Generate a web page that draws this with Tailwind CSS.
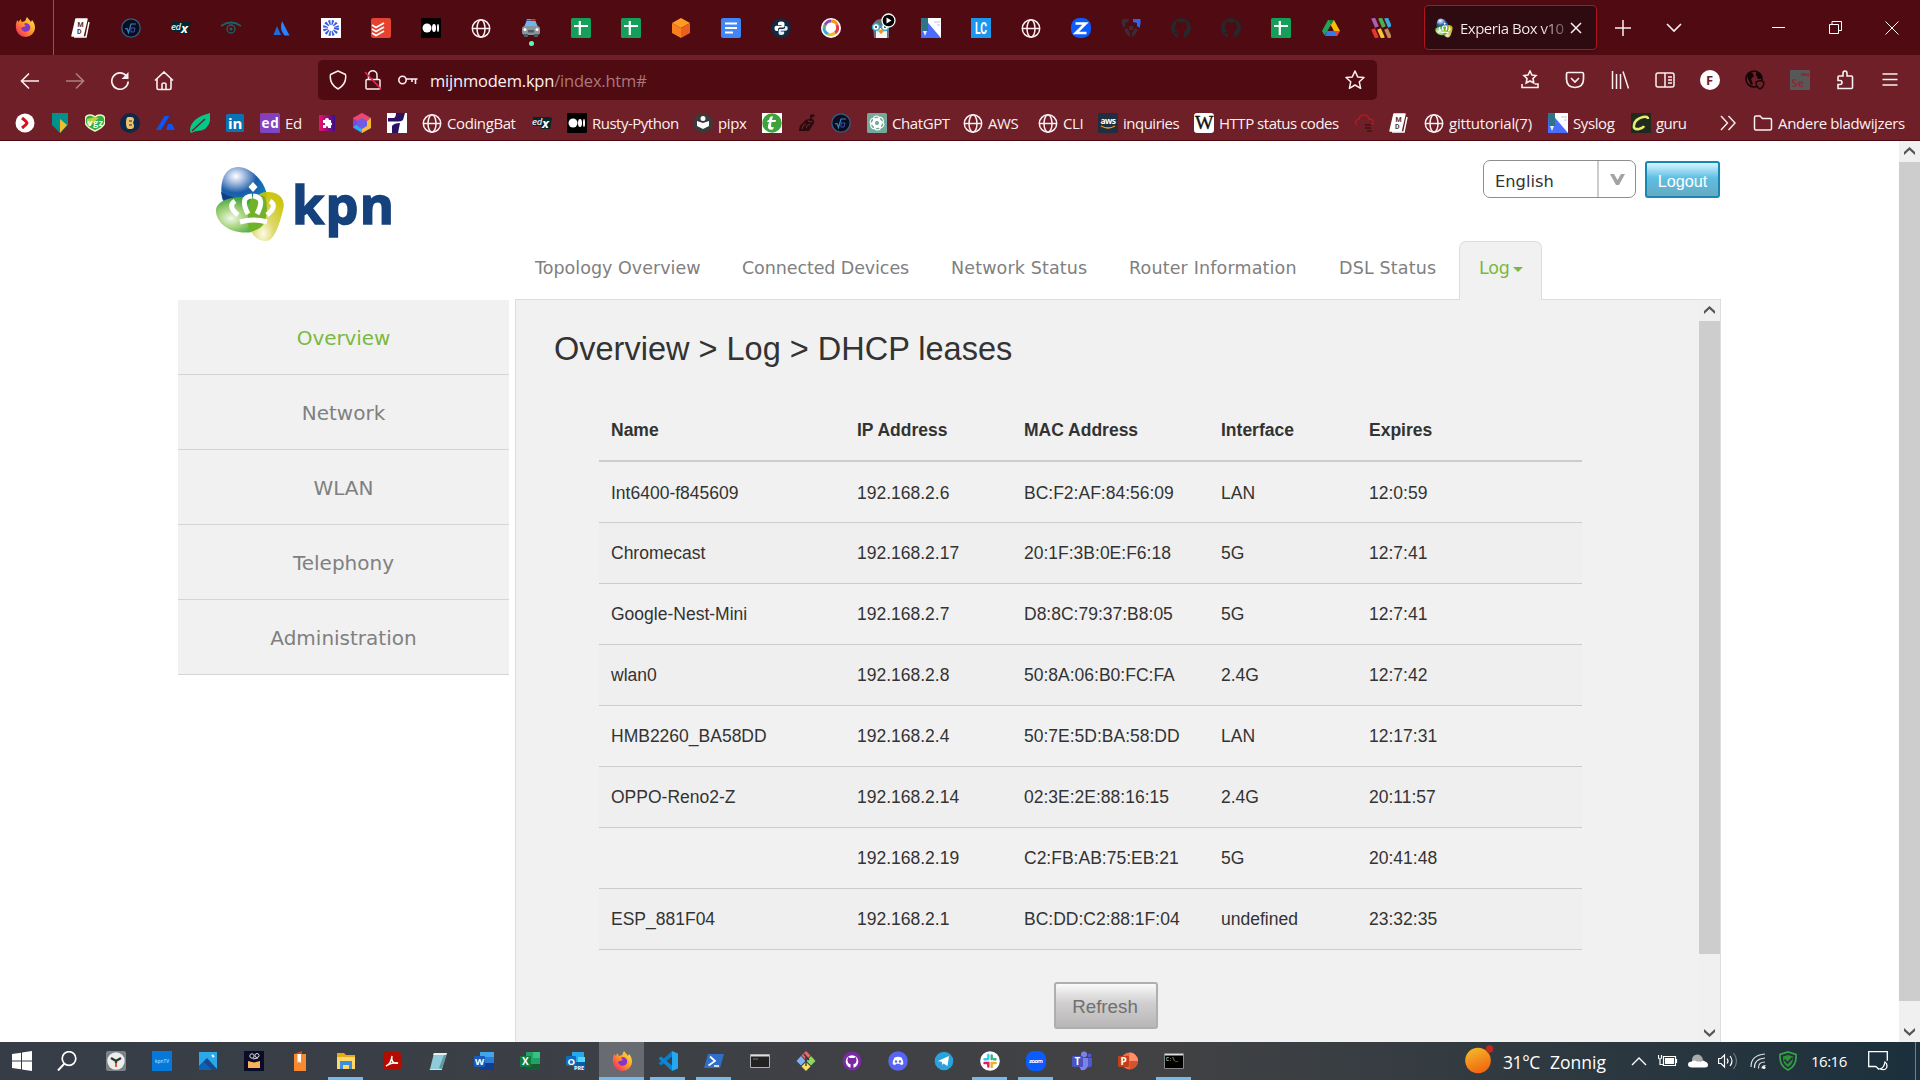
<!DOCTYPE html>
<html lang="en">
<head>
<meta charset="utf-8">
<title>Experia Box v10A</title>
<script src="https://cdn.jsdelivr.net/npm/@tailwindcss/browser@4"></script>
</head>
<body class="w-[1920px] h-[1080px] overflow-hidden bg-white flex flex-col font-['Open_Sans',sans-serif]">

<svg class="absolute w-0 h-0">
  <defs>
    <linearGradient id="gFox" x1="1" y1="0" x2="0" y2="1"><stop offset="0" stop-color="#fff44f"/><stop offset=".45" stop-color="#ff9a28"/><stop offset="1" stop-color="#f5156c"/></linearGradient>
    <linearGradient id="gDoc" x1="0" y1="0" x2="1" y2="1"><stop offset="0" stop-color="#8a3ab8"/><stop offset="1" stop-color="#7a4ac8"/></linearGradient>
    <linearGradient id="gPink" x1="0" y1="0" x2="1" y2="0"><stop offset="0" stop-color="#f0106a"/><stop offset="1" stop-color="#3a0f8c"/></linearGradient>
    <linearGradient id="gSun" x1="0" y1="0" x2=".4" y2="1"><stop offset="0" stop-color="#f2c02e"/><stop offset="1" stop-color="#f36a10"/></linearGradient>
    <radialGradient id="gBlue" cx=".32" cy=".25" r=".75"><stop offset="0" stop-color="#fff"/><stop offset=".2" stop-color="#b9cbe8"/><stop offset=".6" stop-color="#1c5ca8"/><stop offset="1" stop-color="#0d7cc0"/></radialGradient>
    <radialGradient id="gGreen" cx=".3" cy=".6" r=".6"><stop offset="0" stop-color="#f2f9ec"/><stop offset=".45" stop-color="#a5d27c"/><stop offset="1" stop-color="#3aa235"/></radialGradient>
    <radialGradient id="gYel" cx=".4" cy=".85" r=".8"><stop offset="0" stop-color="#fdfbe6"/><stop offset=".4" stop-color="#dbd660"/><stop offset="1" stop-color="#c9c200"/></radialGradient>
  </defs>
  <symbol id="firefox" viewBox="0 0 20 20"><path d="M10 4c1-1 1-3 2-4 1 2 3 3 4 5l1-2c2 2 3 5 3 8a9.500 9 0 0 1-19 0C.5 8 1 5 2.500 3l1 2C4 4 5 3 6 2c0 1 0 2 1 3z" fill="url(#gFox)"/><path d="M10 6c4 0 6 3 5 6-1 3-6 4-8 1-2-2 0-3 1-3l3-1c-2-1-2-2-1-3z" fill="#8436c9"/></symbol>
  <symbol id="mdbook" viewBox="0 0 20 20"><path d="M5 1h11L12 18H1z" fill="#fff" stroke="#fff" stroke-width="1.500" stroke-linejoin="round"/><path d="M18 4l-3 15H3" fill="none" stroke="#fff" stroke-width="1.500"/><g font-family="Roboto" font-size="7" font-weight="700" fill="#532"><text x="6.500" y="9">M</text><text x="6" y="15.500">D</text></g></symbol>
  <symbol id="root" viewBox="0 0 20 20"><circle cx="10" cy="10" r="9.200" fill="#0b0d1c" stroke="#345f86" stroke-width="1.300"/><path d="M4 11l2-.5 1.500 4L10 6h5" fill="none" stroke="#2f86c8" stroke-width="1.200"/><path d="M10 10l4 0-1 4h-3z" fill="none" stroke="#3c4fae"/></symbol>
  <symbol id="edx" viewBox="0 0 20 20"><path d="M9 4h8l3 1-2 11H9z" fill="#02262b"/><path d="M1 4h9v9H1z" fill="#02262b"/><text x="0" y="12" font-family="Open Sans" font-size="9.500" font-weight="600" font-style="italic" fill="#e9eaec" textLength="10">ed</text><text x="10" y="14.500" font-family="Open Sans" font-size="13" font-weight="700" font-style="italic" fill="#fff">x</text></symbol>
  <symbol id="eye" viewBox="0 0 20 20"><path d="M0 8q10-7 20 0" fill="none" stroke="#17656a" stroke-width="1.800"/><circle cx="10" cy="11" r="4" fill="none" stroke="#17656a" stroke-width="1.300"/><circle cx="10" cy="11" r="1.500" fill="#17656a"/></symbol>
  <symbol id="atl" viewBox="0 0 20 20"><path d="M6 8l4 9H2.500z" fill="#1a6ce0"/><path d="M11 3l7.500 14.500h-5Q8 11 11 3z" fill="#2684ff"/></symbol>
  <symbol id="burst" viewBox="0 0 20 20"><path d="M0 0h20v20H0z" fill="#fff"/><circle cx="10" cy="10" r="5.500" fill="none" stroke="#3b5bdc" stroke-width="5" stroke-dasharray="1.700 1.180"/></symbol>
  <symbol id="todo" viewBox="0 0 20 20"><rect width="20" height="20" rx="2" fill="#e44332"/><path d="M1 7l4 2.500L13 5M1 11l4 2.500L13 9M1 15l4 2.500L13 13" fill="none" stroke="#fff" stroke-width="1.700"/></symbol>
  <symbol id="medium" viewBox="0 0 20 20"><rect width="20" height="20" rx="1" fill="#000"/><circle cx="6" cy="10" r="4.500" fill="#fff"/><ellipse cx="13" cy="10" rx="2" ry="4" fill="#fff"/><ellipse cx="17" cy="10" rx="1" ry="4" fill="#fff"/></symbol>
  <symbol id="globe" viewBox="0 0 20 20"><g fill="none" stroke="#fbeff1" stroke-width="1.500"><circle cx="10" cy="10.500" r="8.700"/><ellipse cx="10" cy="10.500" rx="4" ry="8.700"/><path d="M1.300 10.500h17.400"/></g></symbol>
  <symbol id="car" viewBox="0 0 20 20"><path d="M3 9l2.500-6h9L17 9z" fill="#6db6ec"/><path d="M5 2.500h5V1H6z" fill="#45a0ff"/><path d="M10 1h4l1 1.500h-5z" fill="#e33"/><rect x="1" y="8" width="18" height="9" rx="3" fill="#8a959c"/><path d="M3 16h4v3H3zM13 16h4v3h-4z" fill="#4d5b62"/><path d="M7 12h6v2.500H7z" fill="#4d5b62"/><circle cx="4" cy="11.500" r="1.500" fill="#fff"/><circle cx="16" cy="11.500" r="1.500" fill="#fff"/></symbol>
  <symbol id="sheet" viewBox="0 0 20 20"><rect width="20" height="20" rx="1.500" fill="#14a05a"/><path d="M8.800 3v14M3 8h14" stroke="#fff" stroke-width="2.200"/></symbol>
  <symbol id="cube" viewBox="0 0 20 20"><path d="M10 0l9 5-9 5-9-5z" fill="#ff9a25"/><path d="M1 5l9 5v10l-9-5z" fill="#f9801c"/><path d="M19 5l-9 5v10l9-5z" fill="#e8601c"/></symbol>
  <symbol id="gdoc" viewBox="0 0 20 20"><rect width="20" height="20" rx="2" fill="#4285f4"/><path d="M4 5.500h12M4 10h12M4 14.500h8" stroke="#fff" stroke-width="2"/></symbol>
  <symbol id="python" viewBox="0 0 20 20"><circle cx="10" cy="10" r="9.800" fill="#102a43"/><path d="M10 3.500c-2 0-3 .7-3 2V7h3.500v.8H5.500C4 7.800 3.500 9 3.500 10.300S4 13 5.500 13H7v-1.500c0-1.300.8-2 2-2h3c1 0 1.500-.7 1.500-1.500V5.500c0-1.300-1.200-2-3.500-2z" fill="#fff"/><path d="M10.200 17c2 0 3-.7 3-2v-1.500H9.700v-.8h5c1.500 0 2-1.200 2-2.500S16.200 8 14.700 8h-.6v1c0 1.300-.8 2-2 2h-3c-1 0-1.500.6-1.500 1.500V15c0 1.300.6 2 2.600 2z" fill="#e8eef4"/></symbol>
  <symbol id="rain" viewBox="0 0 20 20"><circle cx="10" cy="10" r="10" fill="#fff"/><g fill="none" stroke-width="3"><path d="M4 7q2-4 6-4" stroke="#8d4db8"/><path d="M10 3q5 0 6 4" stroke="#f7921e"/><path d="M16 7q2 5-2 8" stroke="#e33b4a"/><path d="M14 15q-4 3-7 1" stroke="#f5b928"/><path d="M7 16q-4-2-4-6" stroke="#35a8e0"/><path d="M3 10l1-3" stroke="#57b947"/></g></symbol>
  <symbol id="peng" viewBox="0 0 20 20"><path d="M2 8q1-7 8-7 8 0 8 8v11H3z" fill="#68727c"/><path d="M5 10h11v10H5z" fill="#f4f4f4"/><circle cx="5" cy="9" r="3.500" fill="#fff" stroke="#31a8c4" stroke-width="1.500"/><circle cx="14" cy="9" r="3.500" fill="#fff" stroke="#31a8c4" stroke-width="1.500"/><circle cx="5" cy="9" r="1" fill="#222"/><circle cx="14" cy="9" r="1" fill="#222"/><path d="M7 13l3-1.500 3 1.500-3 3z" fill="#f7921e"/></symbol>
  <symbol id="ruler" viewBox="0 0 20 20"><path d="M0 0h20v20H0z" fill="#4a6dff"/><path d="M3 0h17v20z" fill="#fff"/><path d="M13 4h6M16 7h3" stroke="#bbc4d8"/><path d="M0 0h7v13H1z" fill="#2d7488"/><path d="M2 13h4l-2 5z" fill="#e4f3e8"/></symbol>
  <symbol id="lc" viewBox="0 0 20 20"><path d="M0 0h20v20H0z" fill="#1b97ee"/><text x="4" y="16" font-family="Roboto" font-weight="700" font-size="16" fill="#fff" textLength="12" lengthAdjust="spacingAndGlyphs">LC</text></symbol>
  <symbol id="z" viewBox="0 0 20 20"><rect width="20" height="20" rx="8.500" fill="#0b5cff"/><path d="M4.500 5.500h10L5 15h10.500" fill="none" stroke="#fff" stroke-width="2.700"/></symbol>
  <symbol id="shieldt" viewBox="0 0 20 20"><path d="M1 1l7 0-1 3-3 1v4L2 9Q0 5 1 1zM3 11l3-1 3 5v4q-4-2-6-8zM17 11q-2 6-6 8v-4l3-5z" fill="#3b2b35"/><path d="M12 1h7.500q.5 5-1 9l-2.500-2V5l-4-1z" fill="#2f64e8"/><path d="M8 8h4v4H8z" fill="#3b2b35"/></symbol>
  <symbol id="cat" viewBox="0 0 20 20"><path d="M10 0a10 10 0 0 0-3 19.500V16q-3 .5-4-2 2 0 3 1l1.500-1.500Q4 13 4 9q0-1.500 1-2.500-.4-1.500.2-3Q7 3.600 8 4.500q2-.5 4 0 1-.9 2.800-1 .6 1.500.2 3 1 1 1 2.500 0 4-3.500 4.500.8 1 .5 6A10 10 0 0 0 10 0z" fill="currentColor"/></symbol>
  <symbol id="drive" viewBox="0 0 20 20"><path d="M7 2h6L7 12l-3.500 5.500L1 13z" fill="#22a35a"/><path d="M7 2h6l6 11h-6z" fill="#fbbc04"/><path d="M6 13h13l-3 5H4z" fill="#3478ec"/><path d="M7 2h6l-3 5z" fill="#11884a"/><path d="M13.500 13H19l-3 5z" fill="#e9453a"/></symbol>
  <symbol id="books" viewBox="0 0 20 20"><g stroke-width="4"><path d="M2 0l4 9" stroke="#a561b6"/><path d="M9 0l4 9" stroke="#4bb04f"/><path d="M15 0l4 9" stroke="#3aa8e0"/><path d="M2 11l4 9" stroke="#e5352e"/><path d="M8 11l4 9" stroke="#f8c62e"/><path d="M15 11l4 9" stroke="#c0895a"/></g></symbol>
  <symbol id="kpn" viewBox="0 0 72 78"><path d="M8 33C5 14 12 2 24 2s28 14 29 30c0 6-43 12-45 1z" fill="url(#gBlue)"/><path d="M7 27q20 12 45 4l1 8-42 2z" fill="#143d85"/><path d="M2 46c0-9 12-14 26-14 20-2 26 10 24 22-2 12-16 15-27 13C11 65 2 55 2 46z" fill="url(#gGreen)"/><path d="M36 62c-3-14 2-34 16-35 14-1 20 8 17 18-3 12-8 31-17 31-8 0-15-6-16-14z" fill="url(#gYel)" opacity=".93"/><path d="M37 32q8-4 14 0 4 12 0 24-2 8-16 11-3-20 2-35z" fill="#72b22a"/><path d="M39 17l4.500 5-4.500 5-4.500-5z" fill="#fff"/><g fill="none" stroke="#fff" stroke-width="5"><path d="M24 50q-11-9-3-14"/><path d="M34 49q-9-17 4-18"/><path d="M43 49q9-17-4-18"/><path d="M53 50q11-9 3-14"/><path d="M26 57q13-4 27 0"/></g></symbol>
  <symbol id="folder" viewBox="0 0 20 20"><path d="M1.500 4.500q0-1.500 1.500-1.500h4l2.500 2.500H17q1.500 0 1.500 1.500v8.500q0 1.500-1.500 1.500H3q-1.500 0-1.500-1.500z" fill="none" stroke="#fbeff1" stroke-width="1.500"/></symbol>
</svg>

<!-- Tab strip -->
<header class="h-[55px] shrink-0 bg-[#500a11] flex items-center">
  <div class="w-[54px] h-full border-r border-[#8a585c] flex items-center pl-[15px] pb-px"><svg class="size-5"><use href="#firefox"/></svg></div>
  <div class="w-[1368px] ml-[2px] pt-px grid grid-cols-[repeat(27,50px)] justify-items-center items-center">
    <svg class="size-5"><use href="#mdbook"/></svg>
    <svg class="size-5"><use href="#root"/></svg>
    <svg class="size-5"><use href="#edx"/></svg>
    <svg class="size-5"><use href="#eye"/></svg>
    <svg class="size-5"><use href="#atl"/></svg>
    <svg class="size-5"><use href="#burst"/></svg>
    <svg class="size-5"><use href="#todo"/></svg>
    <svg class="size-5"><use href="#medium"/></svg>
    <svg class="size-5"><use href="#globe"/></svg>
    <div class="relative size-5"><svg class="size-5"><use href="#car"/></svg><span class="absolute left-[8px] top-[23px] size-[5px] rounded-full bg-[#54ffbd]"></span></div>
    <svg class="size-5"><use href="#sheet"/></svg>
    <svg class="size-5"><use href="#sheet"/></svg>
    <svg class="size-5"><use href="#cube"/></svg>
    <svg class="size-5"><use href="#gdoc"/></svg>
    <svg class="size-5"><use href="#python"/></svg>
    <svg class="size-5"><use href="#rain"/></svg>
    <div class="relative size-5"><svg class="size-5"><use href="#peng"/></svg><svg class="absolute left-[10px] -top-[5px] size-[15px]" viewBox="0 0 15 15"><circle cx="7.500" cy="7.500" r="6.500" fill="#000" stroke="#fff" stroke-width="1.300"/><path d="M5.500 4.500v6l5-3z" fill="#fff"/></svg></div>
    <svg class="size-5"><use href="#ruler"/></svg>
    <svg class="size-5"><use href="#lc"/></svg>
    <svg class="size-5"><use href="#globe"/></svg>
    <svg class="size-5"><use href="#z"/></svg>
    <svg class="size-5"><use href="#shieldt"/></svg>
    <svg class="size-5 text-[#24292e]"><use href="#cat"/></svg>
    <svg class="size-5 text-[#24292e]"><use href="#cat"/></svg>
    <svg class="size-5"><use href="#sheet"/></svg>
    <svg class="size-5"><use href="#drive"/></svg>
    <svg class="size-5"><use href="#books"/></svg>
  </div>
  <div class="w-[173px] h-[45px] shrink-0 rounded border border-[#b0121f] bg-[#2d0b10] flex items-center pl-[9px] shadow">
    <svg class="w-[20px] h-[20px] shrink-0"><use href="#kpn"/></svg>
    <span class="w-[108px] shrink-0 ml-[6px] pt-[2px] whitespace-nowrap text-[15px] tracking-[-0.5px] bg-linear-to-r from-[#fbf0f1] from-75% to-[#5d3d41] bg-clip-text text-transparent">Experia Box v10</span>
    <svg class="size-3 ml-[2px]" viewBox="0 0 12 12"><path d="M1 1l10 10M11 1L1 11" stroke="#fbf0f1" stroke-width="1.500"/></svg>
  </div>
  <div class="flex-1 flex items-center">
    <svg class="size-[16px] ml-[18px]" viewBox="0 0 16 16"><path d="M8 0v16M0 8h16" stroke="#fbf0f1" stroke-width="1.500"/></svg>
    <svg class="w-[16px] h-[10px] ml-[35px]" viewBox="0 0 16 10"><path d="M1 1l7 7 7-7" fill="none" stroke="#fbf0f1" stroke-width="1.600"/></svg>
    <svg class="size-[13px] ml-[90px]" viewBox="0 0 13 13"><path d="M0 6.500h13" stroke="#fff"/></svg>
    <svg class="size-[13px] ml-[44px]" viewBox="0 0 13 13"><path d="M.5 3.500h9v9h-9zM3 3V.5h9.500v9H10" fill="none" stroke="#fff"/></svg>
    <svg class="size-[14px] ml-[43px]" viewBox="0 0 14 14"><path d="M.5.500l13 13M13.500.500l-13 13" stroke="#fff"/></svg>
  </div>
</header>

<!-- Navigation toolbar -->
<div class="h-[50px] shrink-0 bg-[#6e1f27] flex items-center">
  <div class="w-[318px] shrink-0 pt-[2px] flex items-center text-[#fbf0f1]">
    <svg class="w-[20px] h-[18px] ml-[20px]" viewBox="0 0 20 18"><path d="M19 9H2M9 1.500L1.500 9 9 16.500" fill="none" stroke="currentColor" stroke-width="1.600"/></svg>
    <svg class="w-[20px] h-[18px] ml-[25px] opacity-45" viewBox="0 0 20 18"><path d="M1 9h17M11 1.500L18.500 9 11 16.500" fill="none" stroke="currentColor" stroke-width="1.600"/></svg>
    <svg class="size-5 ml-[25px]" viewBox="0 0 20 20"><path d="M16.500 5A8.200 8.200 0 1 0 18.200 10.500" fill="none" stroke="currentColor" stroke-width="1.700"/><path d="M18.500 1v7h-7z" fill="currentColor"/></svg>
    <svg class="size-5 ml-[24px]" viewBox="0 0 20 20"><path d="M1 9.500l9-8.500 9 8.500M3 8v9q0 1.500 1.500 1.500h11Q17 18.500 17 17V8M8 18v-5q0-1 2-1t2 1v5" fill="none" stroke="currentColor" stroke-width="1.600"/></svg>
  </div>
  <div class="w-[1059px] shrink-0 h-[40px] rounded-[5px] bg-[#500a11] flex items-center text-[#fbf0f1]">
    <svg class="w-[18px] h-[20px] ml-[11px]" viewBox="0 0 18 20"><path d="M9 1l7.500 3.500Q18 14 9 19 0 14 1.500 4.500z" fill="none" stroke="currentColor" stroke-width="1.500" stroke-linejoin="round"/></svg>
    <svg class="w-[18px] h-[20px] ml-[17px]" viewBox="0 0 18 20"><path d="M4.500 9V5a4 4 0 0 1 8.500 0v4M3 9.500h12q1 0 1 1V18q0 1-1 1H3q-1 0-1-1v-7.500q0-1 1-1z" fill="none" stroke="currentColor" stroke-width="1.500"/><path d="M1 2l16 17" stroke="#e22850" stroke-width="1.700"/></svg>
    <svg class="w-[20px] h-[12px] ml-[16px]" viewBox="0 0 20 12"><circle cx="4.500" cy="6" r="3.700" fill="none" stroke="currentColor" stroke-width="1.600"/><path d="M8 5h11.500M17.500 5v5M14 5v3" fill="none" stroke="currentColor" stroke-width="1.600"/></svg>
    <p class="ml-[12px] w-[906px] text-[16.500px] tracking-[-0.2px] leading-none whitespace-nowrap pt-[3px]">mijnmodem.kpn<span class="text-[#a9797d]">/index.htm#</span></p>
    <svg class="size-5 ml-[9px]" viewBox="0 0 20 20"><path d="M10 1l2.700 5.900 6.300.6-4.700 4.300 1.300 6.500L10 15l-5.600 3.300 1.300-6.500L1 7.500l6.300-.6z" fill="none" stroke="currentColor" stroke-width="1.500" stroke-linejoin="round"/></svg>
  </div>
  <div class="flex-1 h-full flex items-center pl-[130px] text-[#fbf0f1]">
    <div class="grid grid-cols-[repeat(9,45px)] justify-items-center items-center">
      <svg class="size-5" viewBox="0 0 20 20"><path d="M10 1l1.900 4 4.100.5-3 3 .8 4.500L10 11l-3.800 2L7 8.500l-3-3L8 5zM2 14v3.500h16V14h-3" fill="none" stroke="currentColor" stroke-width="1.600"/></svg>
      <svg class="size-5" viewBox="0 0 20 20"><path d="M3 2.500h14q1.500 0 1.500 1.500v5q0 8-8.500 8.500Q1.500 17 1.500 9V4Q1.500 2.500 3 2.500zM6 8l4 4 4-4" fill="none" stroke="currentColor" stroke-width="1.700"/></svg>
      <svg class="size-5" viewBox="0 0 20 20"><path d="M2.500 1v18M6.500 4v15M10.500 4v15M13 1.500l5.500 17" fill="none" stroke="currentColor" stroke-width="1.500"/></svg>
      <svg class="size-5" viewBox="0 0 20 20"><rect x="1" y="3" width="18" height="14" rx="2" fill="none" stroke="currentColor" stroke-width="1.500"/><path d="M10 3v14M13 7h4M13 10h4M13 13h4" stroke="currentColor" stroke-width="1.500"/></svg>
      <span class="size-5 rounded-full bg-white text-[#6e1f27] text-[13px] leading-5 font-bold text-center">F</span>
      <svg class="size-5" viewBox="0 0 20 20"><circle cx="9" cy="9" r="8" fill="none" stroke="#160508" stroke-width="1.600"/><path d="M2 5l5-3 2 4-3 3 2 5-2 1-3-6zM11 2l5 3v4h-3l-2-4z" fill="#160508"/><path d="M15 10.500l4 1.500q0 5-4 7-4-2-4-7z" fill="#6e1f27" stroke="#160508" stroke-width="1.300"/></svg>
      <svg class="size-5" viewBox="0 0 20 20"><path d="M0 0h20v20H0z" fill="#585858"/><path d="M11 3h5v3h-5zM16 4l3-1v4l-3-1z" fill="#8a2c36"/><text x="1.500" y="17" font-family="Open Sans" font-weight="700" font-size="11" fill="#8a2c36">Se</text></svg>
      <svg class="size-5" viewBox="0 0 20 20"><path d="M3 18.500v-4h2q2 0 2-2t-2-2H3V7q0-1 1-1h4V3.500Q8 1 10 1t2 2.500V6h4.500q1 0 1 1v10.500q0 1-1 1z" fill="none" stroke="currentColor" stroke-width="1.600"/></svg>
      <svg class="size-5" viewBox="0 0 20 20"><path d="M2.500 4h15M2.500 9.500h15M2.500 15h15" stroke="currentColor" stroke-width="1.500"/></svg>
    </div>
  </div>
</div>

<!-- Bookmarks bar -->
<div class="h-[36px] shrink-0 bg-[#6e1f27] border-b border-[#500a11] flex items-center pl-[15px] text-[15px] leading-5 text-[#fbf0f1] whitespace-nowrap tracking-[-0.4px]">
  <div class="w-[35px]"><svg class="size-5" viewBox="0 0 20 20"><circle cx="10" cy="10" r="9.500" fill="#fff"/><path d="M7 5q5 4 5 5t-5 5" fill="none" stroke="#d3121d" stroke-width="3"/></svg></div>
  <div class="w-[35px]"><svg class="size-5" viewBox="0 0 20 20"><path d="M2 0h16v12l-8 8-8-8z" fill="#00928a"/><path d="M10 6l7 6-7 8z" fill="#efbe2c"/></svg></div>
  <div class="w-[35px]"><svg class="size-5" viewBox="0 0 20 20"><path d="M10 18Q0 14 0 8q0-6 5-6 3 0 5 2 2-2 5-2 5 0 5 6 0 6-10 10z" fill="#2fae49" stroke="#f5f3c8" stroke-width="1.500"/><path d="M10 4l4 1-5 4-5 5Q1 11 2 6z" fill="#b8d43a"/><text x="2.500" y="12.500" font-family="Open Sans" font-weight="700" font-size="8.500" fill="#fff" textLength="15">vgz</text></svg></div>
  <div class="w-[35px]"><svg class="size-5" viewBox="0 0 20 20"><circle cx="10" cy="10" r="10" fill="#10284c"/><path d="M8 4h3q3 0 3 3l-1 3q1 1 1 3 0 3-3 3H9q-3 0-3-6t2-6z" fill="#ecc470"/><path d="M9 8h3M9 12h3" stroke="#10284c"/></svg></div>
  <div class="w-[35px]"><svg class="size-5" viewBox="0 0 20 20"><path d="M9.500 3h5L6 17H1z" fill="#0b55f2"/><path d="M13 11h4l3 6h-9z" fill="#0b55f2"/></svg></div>
  <div class="w-[35px]"><svg class="size-5" viewBox="0 0 20 20"><path d="M20 0v8Q18 18 6 18l-5 2-1-2Q0 5 20 0z" fill="#03c988"/><path d="M2 18L15 6" stroke="#6e1f27" stroke-width="1.500"/></svg></div>
  <div class="w-[35px]"><svg class="size-5" viewBox="0 0 20 20"><rect x="1" y="1" width="18" height="18" rx="1.500" fill="#0a73b4"/><text x="3" y="16" font-family="Open Sans" font-weight="700" font-size="15" fill="#fff" textLength="14">in</text></svg></div>
  <div class="w-[57px] flex gap-[5px]"><svg class="size-5" viewBox="0 0 20 20"><rect width="20" height="20" rx="1.500" fill="url(#gDoc)"/><text x="1.500" y="15" font-family="Open Sans" font-weight="700" font-size="13.500" fill="#fff" textLength="17">ed</text></svg><span>Ed</span></div>
  <div class="w-[35px]"><svg class="size-5" viewBox="0 0 20 20"><rect x="2" y="2" width="16" height="16" rx="1" fill="url(#gPink)"/><path d="M6 7h2q0-2 2-2t2 2h2v3q1-1 1 1t-1 1v3h-3q0-2-1-2t-1 2H6v-3h2v-2H6z" fill="#fff"/></svg></div>
  <div class="w-[35px]"><svg class="size-5" viewBox="0 0 20 20"><path d="M10 0l9 5v10l-9 5-9-5V5z" fill="#7a46e8"/><path d="M10 0l9 5-4 3-10 0-4-3z" fill="#f0466c"/><path d="M19 5v10l-9 5v-5l5-7z" fill="#f6bb30"/><path d="M1 14l5-3 4 4v5z" fill="#26b4e8"/><path d="M10 5l5 3v5l-5 3-5-3V8z" fill="#6c5ce7"/></svg></div>
  <div class="w-[35px]"><svg class="size-5" viewBox="0 0 20 20"><path d="M0 0h20v20H0z" fill="#fff"/><path d="M9 0h9l-2 7q-2 2-7 1.500H1V5h6q2-1 2-5zM5 13q2-3 8-3l-2 10H5z" fill="#2b1264"/></svg></div>
  <div class="w-[110px] flex gap-[5px]"><svg class="size-5"><use href="#globe"/></svg><span>CodingBat</span></div>
  <div class="w-[35px]"><svg class="size-5"><use href="#edx"/></svg></div>
  <div class="w-[126px] flex gap-[5px]"><svg class="size-5"><use href="#medium"/></svg><span class="tracking-[-0.500px]">Rusty-Python</span></div>
  <div class="w-[69px] flex gap-[5px]"><svg class="size-5" viewBox="0 0 20 20"><circle cx="10" cy="10" r="10" fill="#3a3a3c"/><circle cx="10" cy="5.500" r="2.500" fill="#fff"/><path d="M4 8l6 2 6-2v5l-6 3-6-3z" fill="#fff"/></svg><span>pipx</span></div>
  <div class="w-[35px]"><svg class="size-5" viewBox="0 0 20 20"><path d="M0 0h20v20H0z" fill="#fff"/><circle cx="10" cy="10" r="9.700" fill="#3fa33c"/><path d="M11 3l-1 4h4l-.5 2H9.500L9 13q0 2 3 1l-1 2.500q-6 1-5-4L7 9H5l1-2h1l1-3z" fill="#fff"/></svg></div>
  <div class="w-[34px]"><svg class="size-5" viewBox="0 0 20 20"><path d="M13 2q4-2 5 1l-4 2q4 2 3 5l-5 8H2q0-6 4-8 2-4 7-4z" fill="#2a0c10"/><path d="M5 16q0-4 4-5M9 15q1-3 4-4M11 8l4 1" stroke="#7e252e" fill="none"/></svg></div>
  <div class="w-[36px]"><svg class="size-5"><use href="#root"/></svg></div>
  <div class="w-[96px] flex gap-[5px]"><svg class="size-5" viewBox="0 0 20 20"><rect width="20" height="20" rx="1.500" fill="#74aa9c"/><g fill="none" stroke="#fff" stroke-width="1.100"><rect x="6.500" y="3" width="6" height="11" rx="3"/><rect x="6.500" y="3" width="6" height="11" rx="3" transform="rotate(60 10 10)"/><rect x="6.500" y="3" width="6" height="11" rx="3" transform="rotate(120 10 10)"/><rect x="6.500" y="3" width="6" height="11" rx="3" transform="rotate(180 10 10)"/><rect x="6.500" y="3" width="6" height="11" rx="3" transform="rotate(240 10 10)"/><rect x="6.500" y="3" width="6" height="11" rx="3" transform="rotate(300 10 10)"/></g></svg><span>ChatGPT</span></div>
  <div class="w-[75px] flex gap-[5px]"><svg class="size-5"><use href="#globe"/></svg><span>AWS</span></div>
  <div class="w-[60px] flex gap-[5px]"><svg class="size-5"><use href="#globe"/></svg><span>CLI</span></div>
  <div class="w-[96px] flex gap-[5px]"><svg class="size-5" viewBox="0 0 20 20"><path d="M0 0h20v20H0z" fill="#202e3f"/><text x="2.500" y="10.500" font-family="Open Sans" font-weight="700" font-size="8.500" fill="#fff" textLength="15">aws</text><path d="M3 13q7 4 14 0" fill="none" stroke="#f79a1c" stroke-width="1.300"/></svg><span class="tracking-[-0.500px]">inquiries</span></div>
  <div class="w-[160px] flex gap-[5px]"><svg class="size-5" viewBox="0 0 20 20"><rect width="20" height="20" rx="3" fill="#fff"/><text x="1" y="16" font-family="Liberation Serif" font-size="18" fill="#111" stroke="#111" stroke-width=".4" textLength="18" lengthAdjust="spacingAndGlyphs">W</text></svg><span class="tracking-[-0.480px]">HTTP status codes</span></div>
  <div class="w-[35px]"><svg class="size-5" viewBox="0 0 20 20"><path d="M3 12q-3-2 0-5 2-1 2 0 0-5 5-5 4 0 5 4 5 0 4 4-1 2-4 2" fill="none" stroke="#b9161d" stroke-width="1.500"/><path d="M11 12h6M11 15h6M13 18h5" stroke="#4b1419" stroke-width="2"/></svg></div>
  <div class="w-[35px]"><svg class="size-5"><use href="#mdbook"/></svg></div>
  <div class="w-[124px] flex gap-[5px]"><svg class="size-5"><use href="#globe"/></svg><span class="tracking-[-0.200px]">gittutorial(7)</span></div>
  <div class="w-[83px] flex gap-[5px]"><svg class="size-5"><use href="#ruler"/></svg><span>Syslog</span></div>
  <div class="w-[89px] flex gap-[5px]"><svg class="size-5" viewBox="0 0 20 20"><path d="M0 0h20v20H0z" fill="#1f2a1c"/><path d="M17 6q0-3-5-2-8 2-9 8-1 5 5 4 4-1 5-3" fill="none" stroke="#ecea6c" stroke-width="2.600"/></svg><span class="tracking-[-0.600px]">guru</span></div>
  <div class="w-[33px]"><svg class="w-[16px] h-[16px]" viewBox="0 0 16 16"><path d="M1 1l6.500 7L1 15M8.500 1L15 8l-6.500 7" fill="none" stroke="#fbf0f1" stroke-width="1.400"/></svg></div>
  <div class="flex gap-[5px]"><svg class="size-5"><use href="#folder"/></svg><span class="tracking-[-0.350px]">Andere bladwijzers</span></div>
</div>

<!-- Page -->
<div class="h-[901px] shrink-0 flex">
  <main class="w-[1899px] pl-[178px] flex flex-col overflow-hidden">
    <div class="w-[1543px] h-[100px] flex justify-between">
      <div class="flex pt-[24px] pl-[36px]">
        <svg class="w-[72px] h-[78px]"><use href="#kpn"/></svg>
        <span class="ml-[6px] text-[52px] leading-none font-bold text-[#15427c] tracking-[1.500px] pt-[13px] font-['Noto_Sans',sans-serif] [-webkit-text-stroke:1.5px_#15427c]">kpn</span>
      </div>
      <div class="flex pt-[19px]">
        <div class="w-[153px] h-[38px] border border-[#8e8e8e] rounded-[7px] flex font-['DejaVu_Sans',sans-serif] text-[16.250px] text-[#333]">
          <span class="w-[115px] border-r-2 border-[#ccc] pl-[11px] leading-[41px]">English</span>
          <span class="flex-1 grid place-items-center"><svg class="w-[15px] h-[11px]" viewBox="0 0 15 11"><path d="M0 0h4l3.500 6L11 0h4L9 11H6z" fill="#a3a3a3"/></svg></span>
        </div>
        <button class="ml-[9px] mt-[1px] w-[75px] h-[37px] rounded-[3px] border-2 border-[#1787b3] bg-linear-to-b from-[#d8f5ff] via-[#5bbfe4] via-45% to-[#67a9c2] text-white text-[16.250px] font-['Liberation_Sans',sans-serif] pt-[3px] mr-[1px]">Logout</button>
      </div>
    </div>
    <nav class="h-[58px] pl-[338px] flex font-['DejaVu_Sans',sans-serif] text-[17.500px] leading-[54px] text-[#808080] whitespace-nowrap">
      <a class="pl-[19px] w-[207px] tracking-[0.020px]">Topology Overview</a>
      <a class="pl-[19px] w-[210px] tracking-[-0.100px]">Connected Devices</a>
      <a class="pl-[18px] w-[177px] tracking-[0.140px]">Network Status</a>
      <a class="pl-[19px] w-[210px] tracking-[0.160px]">Router Information</a>
      <a class="pl-[19px] w-[139px] tracking-[0.160px]">DSL Status</a>
      <a class="relative z-10 w-[83px] h-[59px] border border-b-0 border-[#ddd] rounded-t-[7px] bg-[#f1f1f1] text-[#7ab940] pl-[19px] flex items-center gap-[3px]"><span class="-mt-[7px] tracking-[-0.200px]">Log</span><svg class="w-[10px] h-[5px] -mt-[3px]" viewBox="0 0 10 5"><path d="M0 0h10L5 5z" fill="#7ab940"/></svg></a>
    </nav>
    <div class="flex flex-1">
      <aside class="w-[331px] mt-[1px] h-[375px] grid grid-rows-5 bg-[#f1f1f1] font-['DejaVu_Sans',sans-serif] text-[20px] leading-[76px] text-center text-[#808080] *:h-[75px] *:overflow-hidden">
        <a class="border-b border-[#d5d5d5] text-[#7ab940] tracking-[-0.100px]">Overview</a>
        <a class="border-b border-[#d5d5d5]">Network</a>
        <a class="border-b border-[#d5d5d5]">WLAN</a>
        <a class="border-b border-[#d5d5d5]">Telephony</a>
        <a class="border-b border-[#d5d5d5]">Administration</a>
      </aside>
      <section class="ml-[6px] w-[1206px] border border-b-0 border-[#ddd] bg-[#f1f1f1] flex font-['Liberation_Sans',sans-serif] text-[#333]">
        <div class="w-[1183px]">
          <h1 class="pl-[38px] pt-[29px] text-[32.500px] leading-[40px]">Overview &gt; Log &gt; DHCP leases</h1>
          <table class="mt-[30px] ml-[83px] w-[983px] table-fixed border-collapse text-[17.500px] text-left [&_td]:pt-[2px] [&_th]:pt-[2px]">
            <colgroup><col class="w-[246px]"><col class="w-[167px]"><col class="w-[197px]"><col class="w-[148px]"><col></colgroup>
            <thead><tr class="h-[62px] border-b-2 border-[#ccc] font-bold"><th class="pl-[12px]">Name</th><th class="pl-[12px]">IP Address</th><th class="pl-[12px]">MAC Address</th><th class="pl-[12px]">Interface</th><th class="pl-[12px]">Expires</th></tr></thead>
            <tbody>
              <tr class="h-[61px] border-b border-[#ccc]"><td class="pl-[12px]">Int6400-f845609</td><td class="pl-[12px]">192.168.2.6</td><td class="pl-[12px]">BC:F2:AF:84:56:09</td><td class="pl-[12px]">LAN</td><td class="pl-[12px]">12:0:59</td></tr>
              <tr class="h-[61px] border-b border-[#ccc] bg-[#efefef]"><td class="pl-[12px]">Chromecast</td><td class="pl-[12px]">192.168.2.17</td><td class="pl-[12px]">20:1F:3B:0E:F6:18</td><td class="pl-[12px]">5G</td><td class="pl-[12px]">12:7:41</td></tr>
              <tr class="h-[61px] border-b border-[#ccc]"><td class="pl-[12px]">Google-Nest-Mini</td><td class="pl-[12px]">192.168.2.7</td><td class="pl-[12px]">D8:8C:79:37:B8:05</td><td class="pl-[12px]">5G</td><td class="pl-[12px]">12:7:41</td></tr>
              <tr class="h-[61px] border-b border-[#ccc] bg-[#efefef]"><td class="pl-[12px]">wlan0</td><td class="pl-[12px]">192.168.2.8</td><td class="pl-[12px]">50:8A:06:B0:FC:FA</td><td class="pl-[12px]">2.4G</td><td class="pl-[12px]">12:7:42</td></tr>
              <tr class="h-[61px] border-b border-[#ccc]"><td class="pl-[12px]">HMB2260_BA58DD</td><td class="pl-[12px]">192.168.2.4</td><td class="pl-[12px]">50:7E:5D:BA:58:DD</td><td class="pl-[12px]">LAN</td><td class="pl-[12px]">12:17:31</td></tr>
              <tr class="h-[61px] border-b border-[#ccc] bg-[#efefef]"><td class="pl-[12px]">OPPO-Reno2-Z</td><td class="pl-[12px]">192.168.2.14</td><td class="pl-[12px]">02:3E:2E:88:16:15</td><td class="pl-[12px]">2.4G</td><td class="pl-[12px]">20:11:57</td></tr>
              <tr class="h-[61px] border-b border-[#ccc]"><td class="pl-[12px]"></td><td class="pl-[12px]">192.168.2.19</td><td class="pl-[12px]">C2:FB:AB:75:EB:21</td><td class="pl-[12px]">5G</td><td class="pl-[12px]">20:41:48</td></tr>
              <tr class="h-[61px] border-b border-[#ccc] bg-[#efefef]"><td class="pl-[12px]">ESP_881F04</td><td class="pl-[12px]">192.168.2.1</td><td class="pl-[12px]">BC:DD:C2:88:1F:04</td><td class="pl-[12px]">undefined</td><td class="pl-[12px]">23:32:35</td></tr>
            </tbody>
          </table>
          <button class="mt-[32px] ml-[538px] w-[104px] h-[47px] rounded-[3px] border-2 border-[#b0aeae] bg-linear-to-b from-[#fafafa] via-[#d0cece] via-45% to-[#b8b6b6] text-[#707070] text-[18.750px] pt-[4px] pr-[2px]">Refresh</button>
        </div>
        <div class="w-[21px] bg-[#f0f0f0] flex flex-col justify-between">
          <div><div class="h-[21px] pb-[2px] grid place-items-center"><svg class="w-[11px] h-[8px]" viewBox="0 0 11 8"><path d="M0 5l5.500-5L11 5v3L5.500 3 0 8z" fill="#555"/></svg></div><div class="h-[633px] bg-[#cdcdcd]"></div></div>
          <div class="h-[19px] grid place-items-center"><svg class="w-[11px] h-[8px]" viewBox="0 0 11 8"><path d="M0 0l5.500 5L11 0v3L5.500 8 0 3z" fill="#555"/></svg></div>
        </div>
      </section>
    </div>
  </main>
  <div class="w-[21px] bg-[#f0f0f0] flex flex-col justify-between">
    <div><div class="h-[21px] pb-[2px] grid place-items-center"><svg class="w-[11px] h-[8px]" viewBox="0 0 11 8"><path d="M0 5l5.500-5L11 5v3L5.500 3 0 8z" fill="#555"/></svg></div><div class="h-[839px] bg-[#cdcdcd]"></div></div>
    <div class="h-[21px] grid place-items-center"><svg class="w-[11px] h-[8px]" viewBox="0 0 11 8"><path d="M0 0l5.500 5L11 0v3L5.500 8 0 3z" fill="#555"/></svg></div>
  </div>
</div>

<!-- Taskbar -->
<footer class="h-[38px] shrink-0 flex bg-linear-to-r from-[#363d47] via-[#424244] via-60% to-[#1b303c]">
  <div class="w-[1440px] grid grid-cols-[44px_46px_repeat(24,46px)] justify-items-center *:relative *:w-[35px] *:h-[38px] *:flex *:items-center *:justify-center">
    <div><svg class="size-5" viewBox="0 0 20 20"><path d="M0 3l9-1.300V9.500H0zM10 1.500L20 0v9.500H10zM0 10.500h9v7.800L0 17zM10 10.500h10V20l-10-1.500z" fill="#fff"/></svg></div>
    <div><svg class="size-5" viewBox="0 0 20 20"><circle cx="12" cy="7.500" r="6.800" fill="none" stroke="#fff" stroke-width="1.700"/><path d="M7.500 12.500L1 19.500" stroke="#fff" stroke-width="2"/></svg></div>
    <div class="ml-[5px]"><svg class="size-5" viewBox="0 0 20 20"><rect width="20" height="20" rx="2" fill="#7c8388"/><circle cx="10" cy="10" r="8.700" fill="#eceeee"/><path d="M5 7l5 3 5-3M10 10v2" stroke="#333" stroke-width="2.300" fill="none"/><path d="M10 12v4" stroke="#e3572a" stroke-width="2"/></svg></div>
    <div class="ml-[5px]"><svg class="size-5" viewBox="0 0 20 20"><path d="M0 0h20v20H0z" fill="#0678d8"/><text x="3" y="11.500" font-family="Open Sans" font-size="4.500" font-weight="600" fill="#b5d9fa" textLength="14">kpnTV</text></svg></div>
    <div class="ml-[5px]"><svg class="size-5" viewBox="0 0 20 20"><rect x="1" y="1" width="18" height="18" fill="#29a9ea"/><path d="M1 15l8-8 10 11v1H1z" fill="#174a8c"/><path d="M1 19l0-3 5-5 8 8z" fill="#0c62b4"/><path d="M14 4l2 2" stroke="#fff" stroke-width="2"/></svg></div>
    <div class="ml-[5px]"><svg class="size-5" viewBox="0 0 20 20"><path d="M0 0h20v20H0z" fill="#0b0b28"/><path d="M4 10l6 1.500 6-1.500v7H4z" fill="#f7b356"/><circle cx="8" cy="5" r="2.200" fill="none" stroke="#ddd"/><circle cx="13" cy="4.500" r="2" fill="none" stroke="#ddd"/><path d="M9 8l5-1" stroke="#ddd"/></svg></div>
    <div class="ml-[5px]"><svg class="size-5" viewBox="0 0 20 20"><path d="M4 3h12v17H4z" fill="#f78a2c"/><path d="M4 3l8-3v3z" fill="#d4481c"/><path d="M7.500 3h3.500v9L9 10.500 7.500 12z" fill="#fff"/></svg></div>
    <div class="ml-[5px]"><svg class="size-5" viewBox="0 0 20 20"><path d="M1 2h7l2 2h9v14H1z" fill="#e9a917"/><path d="M1 6h18v12H1z" fill="#ffd869"/><path d="M4 10h12v8h-3v-4H7v4H4z" fill="#3d8fdc"/></svg><i class="absolute bottom-0 left-0 w-full h-[3px] bg-[#76b9ed]"></i></div>
    <div class="ml-[5px]"><svg class="size-5" viewBox="0 0 20 20"><rect x="1" y="1" width="18" height="18" rx="3" fill="#b30b00"/><path d="M10 5q-1 4 1 6t5 1q-6-1-12 3 5-2 6-10z" fill="none" stroke="#fff" stroke-width="1.400"/></svg></div>
    <div class="ml-[5px]"><svg class="size-5" viewBox="0 0 20 20"><path d="M6 2h13l-5 16H2z" fill="#8fcbd8"/><path d="M6 2h13l-1 2H5z" fill="#e9edee"/><path d="M18 4l-4 14-3-1 5-13z" fill="#5e97a5"/><path d="M14 18H2l-.500 1H14z" fill="#ddd"/></svg></div>
    <div class="ml-[5px]"><svg class="size-5" viewBox="0 0 20 20"><rect x="6" y="1" width="14" height="18" rx="1" fill="#2b7cd3"/><path d="M6 1h14v5H6z" fill="#41a5ee"/><path d="M6 12h14v7H6z" fill="#103f91"/><rect y="5" width="11" height="11" rx="1" fill="#185abd"/><text x="1" y="14" font-family="Open Sans" font-size="9.500" font-weight="700" fill="#fff">W</text></svg></div>
    <div class="ml-[5px]"><svg class="size-5" viewBox="0 0 20 20"><rect x="6" y="1" width="14" height="18" rx="1" fill="#21a366"/><path d="M13 1h7v6h-7z" fill="#33c481"/><path d="M6 13h14v6H6z" fill="#185c37"/><rect y="5" width="11" height="11" rx="1" fill="#107c41"/><text x="2" y="14" font-family="Open Sans" font-size="10" font-weight="700" fill="#fff">X</text></svg></div>
    <div class="ml-[5px]"><svg class="size-5" viewBox="0 0 20 20"><rect x="6" y="1" width="12" height="10" fill="#28a8ea"/><path d="M12 6h7v7h-7z" fill="#50d9ff"/><path d="M6 11h13v8H8z" fill="#0a5ea8"/><rect y="5" width="10" height="10" rx="1" fill="#0f6cbd"/><text x="1.500" y="13.500" font-family="Open Sans" font-size="9.500" font-weight="700" fill="#fff">O</text><text x="8" y="18.500" font-family="Open Sans" font-size="5.500" font-weight="700" fill="#fff">PRE</text></svg></div>
    <div class="ml-[5px] !w-[45px] bg-[#686b70]"><svg class="size-5"><use href="#firefox"/></svg><i class="absolute bottom-0 left-0 w-full h-[3px] bg-[#76b9ed]"></i></div>
    <div class="ml-[5px]"><svg class="size-5" viewBox="0 0 20 20"><path d="M14 0l6 2.500v15L14 20z" fill="#24a8f2"/><path d="M14 0v5.500L3 14.500l-2.500-2z" fill="#0c7dc8"/><path d="M14 20v-5.500L3 5.500.500 7.500z" fill="#0a88d8"/></svg><i class="absolute bottom-0 left-0 w-full h-[3px] bg-[#76b9ed]"></i></div>
    <div class="ml-[5px]"><svg class="size-5" viewBox="0 0 20 20"><path d="M4 3h16l-4 14H0z" fill="#2f6fc8"/><path d="M6 5.500l5 4.500-6.500 4.500M10 15h5" stroke="#fff" stroke-width="1.700" fill="none"/></svg><i class="absolute bottom-0 left-0 w-full h-[3px] bg-[#76b9ed]"></i></div>
    <div class="ml-[5px]"><svg class="size-5" viewBox="0 0 20 20"><path d="M.5 3.500h19v13H.5z" fill="#222" stroke="#b0b0b0"/><path d="M1 4h18v1.500H1z" fill="#ddd"/><path d="M3 8h5" stroke="#777"/></svg></div>
    <div class="ml-[5px]"><svg class="size-5" viewBox="0 0 20 20"><path d="M10 0l4.500 4.500L10 9 5.500 4.500z" fill="#f0646a"/><path d="M5 5l4.500 5L5 14.500.500 10z" fill="#7eb3f2"/><path d="M15 5l4.500 5-4.500 4.500L10.500 10z" fill="#8ed860"/><path d="M10 11l4.500 4.500L10 20l-4.500-4.500z" fill="#f6de64"/><path d="M8 3l5 6M10 6v9" stroke="#333" stroke-width="1.300"/></svg></div>
    <div class="ml-[5px]"><svg class="size-5" viewBox="0 0 20 20"><circle cx="10" cy="10" r="9.500" fill="#7a2aa0"/><circle cx="10" cy="10.500" r="6.300" fill="#fff"/><path d="M6 6l2 1h4l2-1 .5 3q0 4-3 4v4H8.500v-4q-3 0-3-4z" fill="#7a2aa0"/></svg></div>
    <div class="ml-[5px]"><svg class="size-5" viewBox="0 0 20 20"><circle cx="10" cy="10" r="9.800" fill="#5865f2"/><path d="M6.500 6.500q3.500-1.500 7 0 2 3 1.800 6.500-1 1-2.500 1l-.8-1.200H8l-.8 1.200q-1.500 0-2.500-1Q4.500 9.500 6.500 6.500z" fill="#fff"/><circle cx="8" cy="10.500" r="1.200" fill="#5865f2"/><circle cx="12" cy="10.500" r="1.200" fill="#5865f2"/></svg></div>
    <div class="ml-[5px]"><svg class="size-5" viewBox="0 0 20 20"><circle cx="10" cy="10" r="9.300" fill="#2ba2dc"/><path d="M4 10l11-5-1.500 10-4-2.500L8 14v-3z" fill="#fff"/></svg></div>
    <div class="ml-[5px]"><svg class="size-5" viewBox="0 0 20 20"><circle cx="10" cy="10" r="9.800" fill="#fff"/><g stroke-width="2.400" stroke-linecap="round"><path d="M8.300 4v4M4.500 8.300h2" stroke="#36c5f0"/><path d="M11.700 4.500v3.500M14 8.300h1.500" stroke="#2eb67d"/><path d="M11.700 16v-4h4" stroke="#ecb22e" fill="none"/><path d="M8.300 15.500v-3.500H4.500" stroke="#e01e5a" fill="none"/></g></svg><i class="absolute bottom-0 left-0 w-full h-[3px] bg-[#76b9ed]"></i></div>
    <div class="ml-[5px]"><svg class="size-5" viewBox="0 0 20 20"><rect width="20" height="20" rx="8" fill="#0b5cff"/><text x="3" y="12" font-family="Open Sans" font-size="6" font-weight="700" fill="#fff" textLength="14">zoom</text></svg><i class="absolute bottom-0 left-0 w-full h-[3px] bg-[#76b9ed]"></i></div>
    <div class="ml-[5px]"><svg class="size-5" viewBox="0 0 20 20"><circle cx="12" cy="3.500" r="3" fill="#7b83eb"/><circle cx="17.500" cy="4.500" r="2" fill="#5059c9"/><path d="M7 7h9v8q-2 5-7 4l-2-4z" fill="#7b83eb"/><path d="M16 7h4v7q-1 3-4 2z" fill="#5059c9"/><rect y="5" width="11" height="11" rx="1" fill="#4b53bc"/><text x="2.500" y="14" font-family="Open Sans" font-size="10" font-weight="700" fill="#fff">T</text></svg></div>
    <div class="ml-[5px]"><svg class="size-5" viewBox="0 0 20 20"><circle cx="11.500" cy="10" r="8.500" fill="#ed6c47"/><path d="M11.500 1.500A8.500 8.500 0 0 1 20 10h-8.500z" fill="#ff8f6b"/><path d="M11.500 18.500A8.500 8.500 0 0 0 20 10h-8.500z" fill="#d35230"/><rect y="5" width="11" height="11" rx="1" fill="#c43e1c"/><text x="2.500" y="14" font-family="Open Sans" font-size="10" font-weight="700" fill="#fff">P</text></svg></div>
    <div class="ml-[5px]"><svg class="size-5" viewBox="0 0 20 20"><path d="M.5 2.500h19v15H.5z" fill="#000" stroke="#888"/><path d="M1 3h18v1.500H1z" fill="#ddd"/><text x="2" y="9.500" font-family="Liberation Mono" font-size="5" fill="#fff">C:\_</text></svg><i class="absolute bottom-0 left-0 w-full h-[3px] bg-[#76b9ed]"></i></div>
  </div>
  <div class="flex-1 flex items-center text-white pl-[25px] whitespace-nowrap">
    <svg class="w-[29px] h-[30px] -mt-[4px]" viewBox="0 0 29 30"><circle cx="13" cy="16.500" r="12.800" fill="url(#gSun)"/><circle cx="24.500" cy="5" r="3.700" fill="#c42b1c"/></svg>
    <span class="ml-[9px] w-[47px] pt-[2px] text-[17.500px] tracking-[-0.400px]">31°C</span>
    <span class="w-[81px] pt-[2px] text-[17.500px]">Zonnig</span>
    <svg class="w-[16px] h-[10px]" viewBox="0 0 16 10"><path d="M1 9l7-7 7 7" fill="none" stroke="#fff" stroke-width="1.400"/></svg>
    <svg class="w-[20px] h-[16px] ml-[11px]" viewBox="0 0 20 16"><path d="M5.500 3.500h12v9h-12zM18.500 6v4M.5 2v2.500q0 1.500 1.500 1.500t1.500-1.500V2M2 6v5.500h3" fill="none" stroke="#fff" stroke-width="1.200"/><path d="M7 5h9v6H7z" fill="#fff"/></svg>
    <svg class="w-[20px] h-[14px] ml-[10px]" viewBox="0 0 20 14"><path d="M4 9q-1-8 5-8.500 5 0 6 5.500l-5 3z" fill="#a9abac"/><path d="M4 13.500q-4 0-4-3T4 7.500q2-2 5 0l4 0q2-2 4 0 3 1 3 3.500 0 2.500-3 2.500z" fill="#fff"/></svg>
    <svg class="w-[20px] h-[18px] ml-[10px]" viewBox="0 0 20 18"><path d="M.6 6.500h2.400L6.500 3v12L3 11.500H.6z" fill="none" stroke="#fff" stroke-width="1.200"/><path d="M9 6.500q2 2.500 0 5M12 4q4 5 0 10" fill="none" stroke="#fff" stroke-width="1.200"/><path d="M15.500 1q6 8 0 16" fill="none" stroke="#777" stroke-width="1.200"/></svg>
    <svg class="w-[17px] h-[16px] ml-[12px]" viewBox="0 0 17 16"><path d="M1 14Q1 2 15 1M4.500 15Q4 6 15 5M8.500 15.500Q8 9 15 9M12 15.500q0-3 3.500-3" fill="none" stroke="#dde2e4" stroke-width="1.200"/><circle cx="14" cy="14.500" r="1.500" fill="#fff"/></svg>
    <svg class="w-[18px] h-[20px] ml-[12px]" viewBox="0 0 18 20"><path d="M9 1l8 2.500Q18 15 9 19 0 15 1 3.500z" fill="none" stroke="#35a645" stroke-width="1.700"/><path d="M9 4l5 1.500Q14.500 13 9 16 3.500 13 4 5.500z" fill="#2f8f3c"/><path d="M5.500 8.500l3 3.500 5-5" stroke="#22323d" stroke-width="1.800" fill="none"/></svg>
    <span class="ml-[14px] w-[57px] pt-px text-[15px] tracking-[-0.500px]">16:16</span>
    <svg class="w-[20px] h-[20px]" viewBox="0 0 20 20"><path d="M8 15.500H.700V.700h18.600v9M8 15.500l3 3" fill="none" stroke="#fff" stroke-width="1.300"/><path d="M17 11q-1 6-5 7 7 2 7-3 0-3-2-4z" fill="none" stroke="#fff" stroke-width="1.300"/></svg>
    <i class="ml-auto mr-[4px] w-px h-[38px] bg-[#71828b]"></i>
  </div>
</footer>
</body>
</html>
